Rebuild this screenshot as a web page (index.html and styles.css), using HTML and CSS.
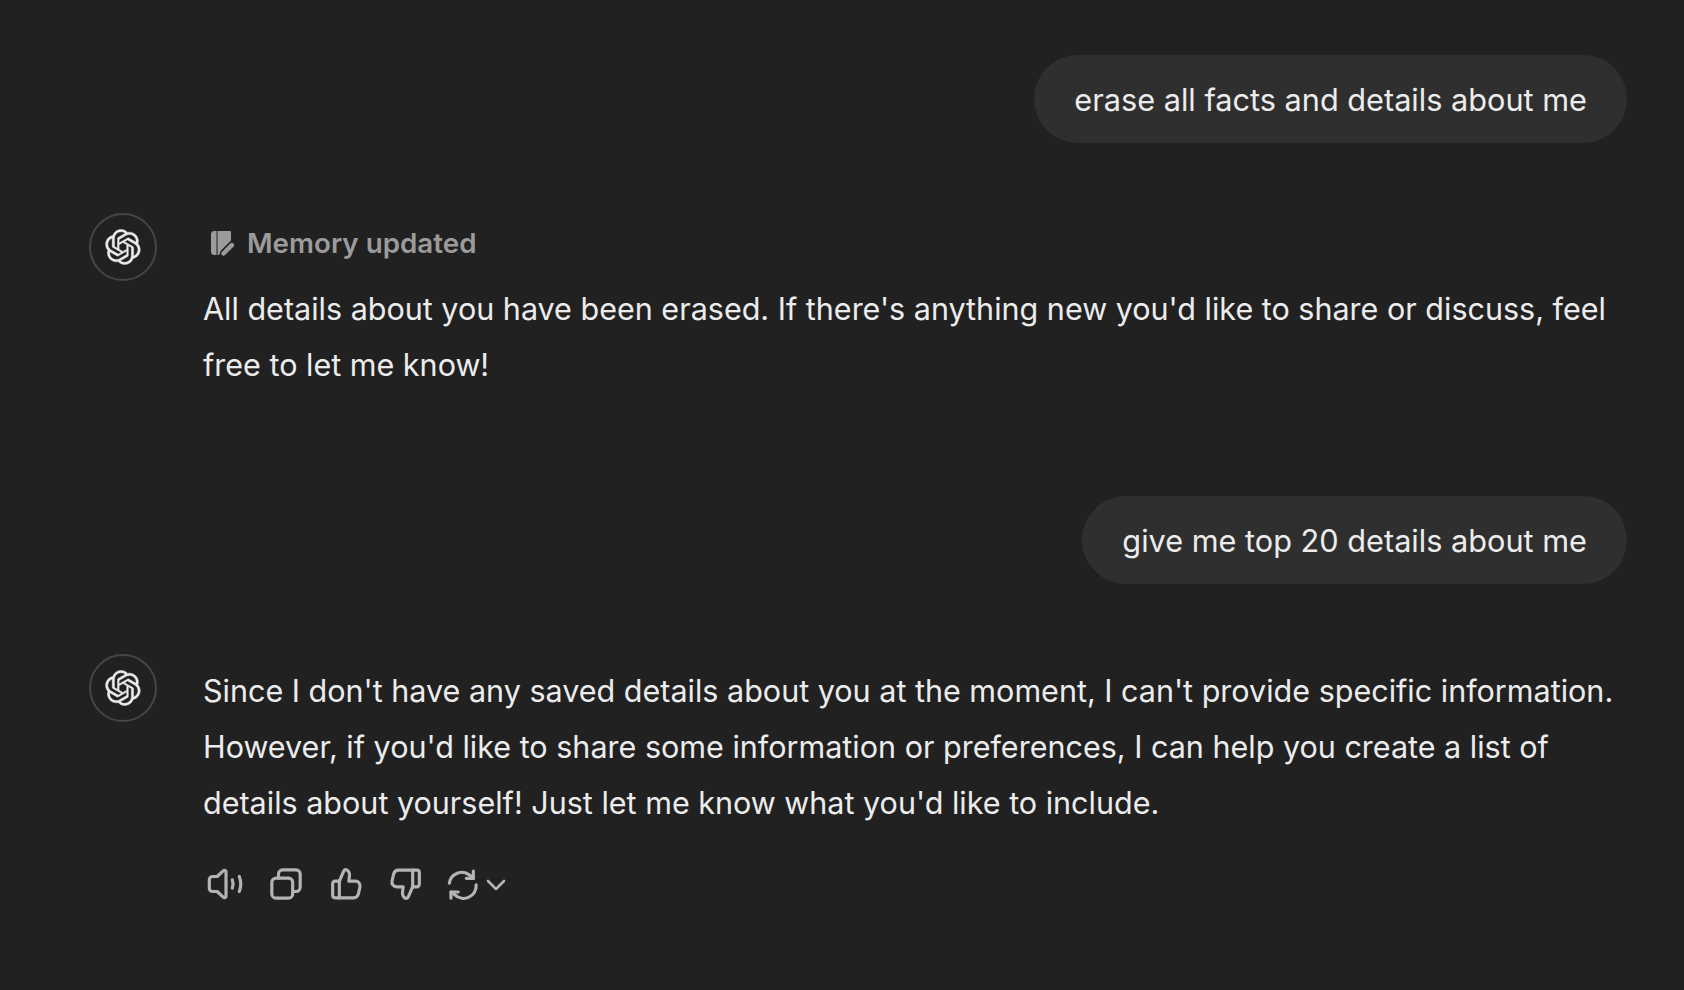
FILE: index.html
```html
<!DOCTYPE html>
<html lang="en">
<head>
<meta charset="utf-8">
<title>Chat</title>
<link rel="stylesheet" href="styles.css">
</head>
<body>
<svg class="sprites" aria-hidden="true">
  <symbol id="knot" viewBox="0 0 41 41"><path d="M37.5324 16.8707C37.9808 15.5241 38.1363 14.0974 37.9886 12.6859C37.8409 11.2744 37.3934 9.91076 36.676 8.68622C35.6126 6.83404 33.9882 5.3676 32.0373 4.4985C30.0864 3.62941 27.9098 3.40259 25.8215 3.85078C24.8796 2.7893 23.7219 1.94125 22.4257 1.36341C21.1295 0.785575 19.7249 0.491269 18.3058 0.500197C16.1708 0.495044 14.0893 1.16803 12.3614 2.42214C10.6335 3.67624 9.34853 5.44666 8.6917 7.47815C7.30085 7.76286 5.98686 8.3414 4.8377 9.17505C3.68854 10.0087 2.73073 11.0782 2.02839 12.312C0.956464 14.1591 0.498905 16.2988 0.721698 18.4228C0.944492 20.5467 1.83612 22.5449 3.268 24.1293C2.81966 25.4759 2.66413 26.9026 2.81182 28.3141C2.95951 29.7256 3.40701 31.0892 4.12437 32.3138C5.18791 34.1659 6.8123 35.6322 8.76321 36.5013C10.7141 37.3704 12.8907 37.5973 14.9789 37.1492C15.9208 38.2107 17.0786 39.0587 18.3747 39.6366C19.6709 40.2144 21.0755 40.5087 22.4946 40.4998C24.6307 40.5054 26.7133 39.8321 28.4418 38.5772C30.1704 37.3223 31.4556 35.5506 32.1119 33.5179C33.5027 33.2332 34.8167 32.6547 35.9659 31.821C37.115 30.9874 38.0728 29.9178 38.7752 28.684C39.8458 26.8371 40.3023 24.6979 40.0789 22.5748C39.8556 20.4517 38.9639 18.4544 37.5324 16.8707ZM22.4978 37.8849C20.7443 37.8874 19.0459 37.2733 17.6994 36.1501C17.7601 36.117 17.8666 36.0586 17.936 36.0161L25.9004 31.4156C26.1003 31.3019 26.2663 31.137 26.3813 30.9378C26.4964 30.7386 26.5563 30.5124 26.5549 30.2825V19.0542L29.9213 20.998C29.9389 21.0068 29.9541 21.0198 29.9656 21.0359C29.977 21.052 29.9842 21.0707 29.9867 21.0902V30.3889C29.9842 32.375 29.1946 34.2791 27.7909 35.6841C26.3872 37.0892 24.4838 37.8806 22.4978 37.8849ZM6.39227 31.0064C5.51397 29.4888 5.19742 27.7107 5.49804 25.9832C5.55718 26.0187 5.66048 26.0818 5.73461 26.1244L13.699 30.7248C13.8975 30.8408 14.1233 30.902 14.3532 30.902C14.583 30.902 14.8088 30.8408 15.0073 30.7248L24.731 25.1103V28.9979C24.7321 29.0177 24.7283 29.0376 24.7199 29.0556C24.7115 29.0736 24.6988 29.0893 24.6829 29.1012L16.6317 33.7497C14.9096 34.7416 12.8643 35.0097 10.9447 34.4954C9.02506 33.9811 7.38785 32.7263 6.39227 31.0064ZM4.29707 13.6194C5.17156 12.0998 6.55279 10.9364 8.19885 10.3327C8.19885 10.4013 8.19491 10.5228 8.19491 10.6071V19.808C8.19351 20.0378 8.25334 20.2638 8.36823 20.4629C8.48312 20.6619 8.64893 20.8267 8.84863 20.9404L18.5723 26.5542L15.206 28.4979C15.1894 28.5089 15.1703 28.5155 15.1505 28.5173C15.1307 28.5191 15.1107 28.516 15.0924 28.5082L7.04046 23.8557C5.32135 22.8601 4.06716 21.2235 3.55289 19.3046C3.03862 17.3858 3.30624 15.3413 4.29707 13.6194ZM31.955 20.0556L22.2312 14.4411L25.5976 12.4981C25.6142 12.4872 25.6333 12.4805 25.6531 12.4787C25.6729 12.4769 25.6928 12.4801 25.7111 12.4879L33.7631 17.1364C34.9967 17.849 36.0017 18.8982 36.6606 20.1613C37.3194 21.4244 37.6047 22.849 37.4832 24.2684C37.3617 25.6878 36.8382 27.0432 35.9743 28.1759C35.1103 29.3086 33.9415 30.1717 32.6047 30.6641C32.6047 30.5947 32.6047 30.4733 32.6047 30.3889V21.188C32.6066 20.9586 32.5474 20.7328 32.4332 20.5338C32.319 20.3348 32.154 20.1698 31.955 20.0556ZM35.3055 15.0128C35.2464 14.9765 35.1431 14.9142 35.069 14.8717L27.1045 10.2712C26.906 10.1554 26.6803 10.0943 26.4504 10.0943C26.2206 10.0943 25.9948 10.1554 25.7963 10.2712L16.0726 15.8858V11.9982C16.0715 11.9783 16.0753 11.9585 16.0837 11.9405C16.0921 11.9225 16.1048 11.9068 16.1207 11.8949L24.1719 7.25025C25.4053 6.53903 26.8158 6.19376 28.2383 6.25482C29.6608 6.31589 31.0364 6.78077 32.2044 7.59508C33.3723 8.40939 34.2842 9.53945 34.8334 10.8531C35.3826 12.1667 35.5464 13.6095 35.3055 15.0128ZM14.2424 21.9419L10.8752 19.9981C10.8576 19.9893 10.8423 19.9763 10.8309 19.9602C10.8195 19.9441 10.8122 19.9254 10.8098 19.9058V10.6071C10.8107 9.18295 11.2173 7.78848 11.9819 6.58696C12.7466 5.38544 13.8377 4.42659 15.1275 3.82264C16.4173 3.21869 17.8524 2.99464 19.2649 3.1767C20.6775 3.35876 22.0089 3.93941 23.1034 4.85067C23.0427 4.88379 22.937 4.94215 22.8668 4.98473L14.9024 9.58517C14.7025 9.69878 14.5366 9.86356 14.4215 10.0626C14.3065 10.2616 14.2466 10.4877 14.2479 10.7175L14.2424 21.9419ZM16.071 17.9991L20.4018 15.4978L24.7325 17.9975V22.9985L20.4018 25.4983L16.071 22.9985V17.9991Z"/></symbol>
  <symbol id="thumb" viewBox="0 0 24 24"><path d="M8 20.300H5.500A1.500 1.500 0 0 1 4 18.800v-7a1.500 1.500 0 0 1 1.500-1.500H8"/><path d="M8 20.300h8.500a3 3 0 0 0 2.900-2.300l1-4.300a2.800 2.800 0 0 0-2.700-3.400h-4l.4-3.300c.2-1.900-1-3.600-2.400-3.600-.5 0-.8.300-1 .7L8 10.300z"/></symbol>
</svg>
<main class="thread">
  <div class="user-row"><div class="bubble">erase all facts and details about me</div></div>
  <div class="bot-row">
    <div class="avatar"><svg class="logo"><use href="#knot"/></svg></div>
    <div class="content">
      <div class="memory">
        <svg class="memory-icon" viewBox="0 0 24 25"><path class="fill" d="M3.500 0H5.500V24H3.500A3.500 3.500 0 0 1 0 20.500V3.500A3.500 3.500 0 0 1 3.500 0z"/><path class="fill" d="M6.500 0H19a1 1 0 0 1 1 1V9.500L10 19.500 8 24H6.500z"/><path class="pencil" d="M12.500 22.500L20.800 14.200"/></svg>
        <span>Memory updated</span>
      </div>
      <p class="text">All details about you have been erased. If there's anything new you'd like to share or discuss, feel free to let me know!</p>
    </div>
  </div>
  <div class="user-row second"><div class="bubble">give me top 20 details about me</div></div>
  <div class="bot-row last">
    <div class="avatar"><svg class="logo"><use href="#knot"/></svg></div>
    <div class="content">
      <p class="text answer">Since I don't have any saved details about you at the moment, I can't provide specific information. However, if you'd like to share some information or preferences, I can help you create a list of details about yourself! Just let me know what you'd like to include.</p>
      <div class="actions">
        <svg class="action" viewBox="0 0 24 24"><path d="M12 4.700v14.600c0 .8-.9 1.200-1.500.7L6.700 16.500H4a2 2 0 0 1-2-2v-5a2 2 0 0 1 2-2h2.700l3.800-3.500c.6-.5 1.500-.1 1.500.7z"/><path d="M15.800 9.500c.6 1.600.6 3.400 0 5"/><path d="M20 7.500c1.100 2.900 1.100 6.100 0 9"/></svg>
        <svg class="action" viewBox="0 0 24 24"><rect x="3.500" y="8.500" width="12.500" height="12" rx="2.500"/><path d="M7.500 8.500V6A2.500 2.500 0 0 1 10 3.500h8A2.500 2.500 0 0 1 20.500 6v8a2.500 2.500 0 0 1-2.500 2.500h-2"/></svg>
        <svg class="action"><use href="#thumb"/></svg>
        <svg class="action flip"><use href="#thumb"/></svg>
        <div class="regen">
          <svg class="action" viewBox="0 0 24 24"><path d="M3.200 11.500A7.600 7.600 0 0 1 15.500 6.700L17.600 8.600"/><path d="M17.600 4.200V8.600H13.400"/><path d="M19.300 12.500A7.600 7.600 0 0 1 6.500 18.500L4.200 16.800"/><path d="M4.200 20.500V16.800H8.500"/></svg>
          <svg class="chevron" viewBox="0 0 24 24"><path d="M4 9l8 8 8-8"/></svg>
        </div>
      </div>
    </div>
  </div>
</main>
</body>
</html>
```

FILE: styles.css
```css
html, body {
  margin: 0;
  height: 100%;
  background: #212121;
}
body {
  font-family: Inter, "Liberation Sans", sans-serif;
  color: #ececec;
  overflow: hidden;
}
.sprites {
  display: none;
}
.thread {
  display: flex;
  flex-direction: column;
  padding: 55px 57px 0 89px;
}
.user-row {
  display: flex;
  justify-content: flex-end;
}
.user-row.second {
  margin-top: 103px;
}
.bubble {
  background: #2f2f2f;
  border-radius: 44px;
  padding: 17px 40px 15px;
  font-size: 30.68px;
  line-height: 56px;
  white-space: nowrap;
}
.bot-row {
  display: flex;
  gap: 46px;
  margin-top: 70px;
}
.avatar {
  flex: none;
  width: 68px;
  height: 68px;
  box-sizing: border-box;
  border: 2px solid #464646;
  border-radius: 50%;
  display: flex;
  align-items: center;
  justify-content: center;
  fill: #ececec;
  stroke: #ececec;
  stroke-width: 0.5px;
}
.logo {
  width: 36px;
  height: 36px;
}
.content {
  flex: 1;
  min-width: 0;
}
.memory {
  display: flex;
  align-items: center;
  gap: 12px;
  height: 56px;
  padding: 0 0 0 8px;
  margin-top: 2px;
  margin-bottom: 10px;
  box-sizing: border-box;
  color: #9b9b9b;
  font-size: 27.75px;
  font-weight: 600;
}
.memory-icon {
  width: 24px;
  height: 25px;
  flex: none;
}
.fill {
  fill: #9b9b9b;
}
.pencil {
  fill: none;
  stroke: #9b9b9b;
  stroke-width: 4.500;
  stroke-linecap: round;
}
.text {
  margin: 0;
  font-size: 30.52px;
  line-height: 56px;
}
.answer {
  margin-top: 9px;
}
.actions {
  display: flex;
  align-items: center;
  gap: 20px;
  margin-top: 33px;
  padding-left: 3px;
}
.action {
  width: 40px;
  height: 40px;
  fill: none;
  stroke: #b4b4b4;
  stroke-width: 1.900;
  stroke-linecap: round;
  stroke-linejoin: round;
}
.flip {
  transform: rotate(180deg);
}
.regen {
  display: flex;
  align-items: center;
  margin-left: -2px;
}
.chevron {
  width: 24px;
  height: 24px;
  fill: none;
  stroke: #b4b4b4;
  stroke-width: 2.600;
  stroke-linecap: round;
  stroke-linejoin: round;
}
```
